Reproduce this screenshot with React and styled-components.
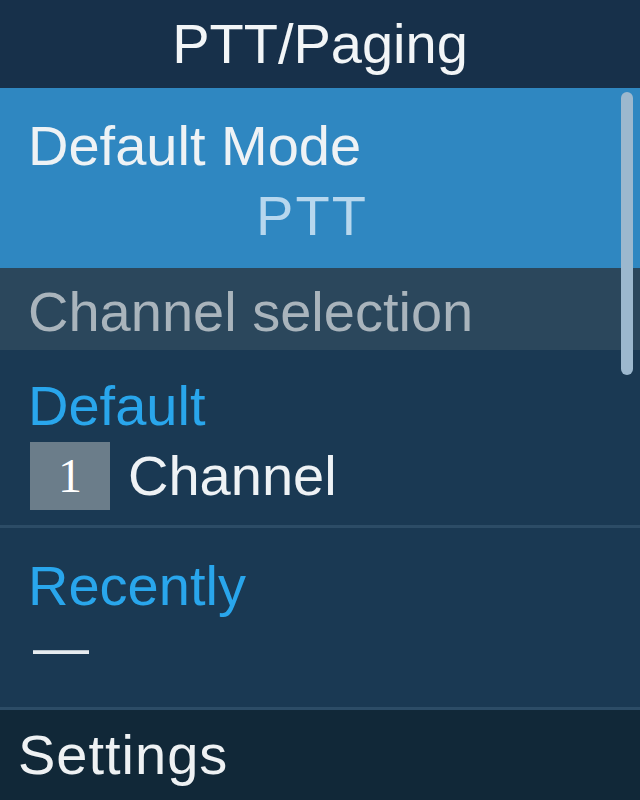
import React from 'react';
import styled, { createGlobalStyle } from 'styled-components';

const GlobalStyle = createGlobalStyle`
  html, body {
    margin: 0;
    padding: 0;
    background: #1a3953;
  }
  body {
    font-family: "Liberation Sans", Arial, sans-serif;
  }
`;

const Screen = styled.div`
  width: 640px;
  height: 800px;
  display: flex;
  flex-direction: column;
  background: #1a3953;
  color: #eef2f5;
  font-size: 56px;
  line-height: 64px;
  overflow: hidden;
`;

const Header = styled.header`
  height: 88px;
  flex: none;
  display: flex;
  align-items: center;
  justify-content: center;
  background: #17304a;
  color: #f2f5f7;
`;

const List = styled.div`
  flex: 1;
  position: relative;
  display: flex;
  flex-direction: column;
`;

const SelectedItem = styled.div`
  height: 180px;
  box-sizing: border-box;
  padding: 26px 44px 20px 28px;
  display: flex;
  flex-direction: column;
  gap: 6px;
  background: #2f87c1;
`;

const ItemValue = styled.div`
  text-align: center;
  color: #b7d7ee;
  letter-spacing: 2px;
`;

const SubHeader = styled.div`
  height: 82px;
  box-sizing: border-box;
  padding: 12px 28px 0;
  background: #2b475c;
  color: #a9b4bc;
`;

const Section = styled.section`
  box-sizing: border-box;
  height: ${(p) => p.$height}px;
  padding: ${(p) => p.$top}px 28px 0;
  display: flex;
  flex-direction: column;
  border-bottom: 3px solid #2c4c66;
`;

const Label = styled.div`
  color: #29a6ec;
`;

const ChannelRow = styled.div`
  margin-top: 4px;
  height: 68px;
  display: flex;
  align-items: center;
  gap: 18px;
`;

const NumberBox = styled.span`
  width: 80px;
  height: 68px;
  margin-left: 2px;
  display: flex;
  align-items: center;
  justify-content: center;
  background: #6b7d8a;
  color: #ffffff;
  font-family: "Liberation Serif", "Times New Roman", serif;
  font-size: 48px;
`;

const Value = styled.span`
  color: #eef2f5;
`;

const Dash = styled.span`
  margin-left: 5px;
  color: #e6ebef;
  line-height: 58px;
`;

const Scrollbar = styled.div`
  position: absolute;
  top: 4px;
  right: 7px;
  width: 12px;
  height: 283px;
  border-radius: 6px;
  background: #9cb8ce;
`;

const Footer = styled.footer`
  height: 90px;
  flex: none;
  display: flex;
  align-items: center;
  padding-left: 18px;
  background: #112838;
  color: #eef1f3;
  letter-spacing: 1px;
`;

const App = () => (
  <>
    <GlobalStyle />
    <Screen>
      <Header>PTT/Paging</Header>
      <List>
        <SelectedItem>
          <div>Default Mode</div>
          <ItemValue>PTT</ItemValue>
        </SelectedItem>
        <SubHeader>Channel selection</SubHeader>
        <Section $height={178} $top={24}>
          <Label>Default</Label>
          <ChannelRow>
            <NumberBox>1</NumberBox>
            <Value>Channel</Value>
          </ChannelRow>
        </Section>
        <Section $height={182} $top={26}>
          <Label>Recently</Label>
          <Dash>—</Dash>
        </Section>
        <Scrollbar />
      </List>
      <Footer>Settings</Footer>
    </Screen>
  </>
);

export default App;
